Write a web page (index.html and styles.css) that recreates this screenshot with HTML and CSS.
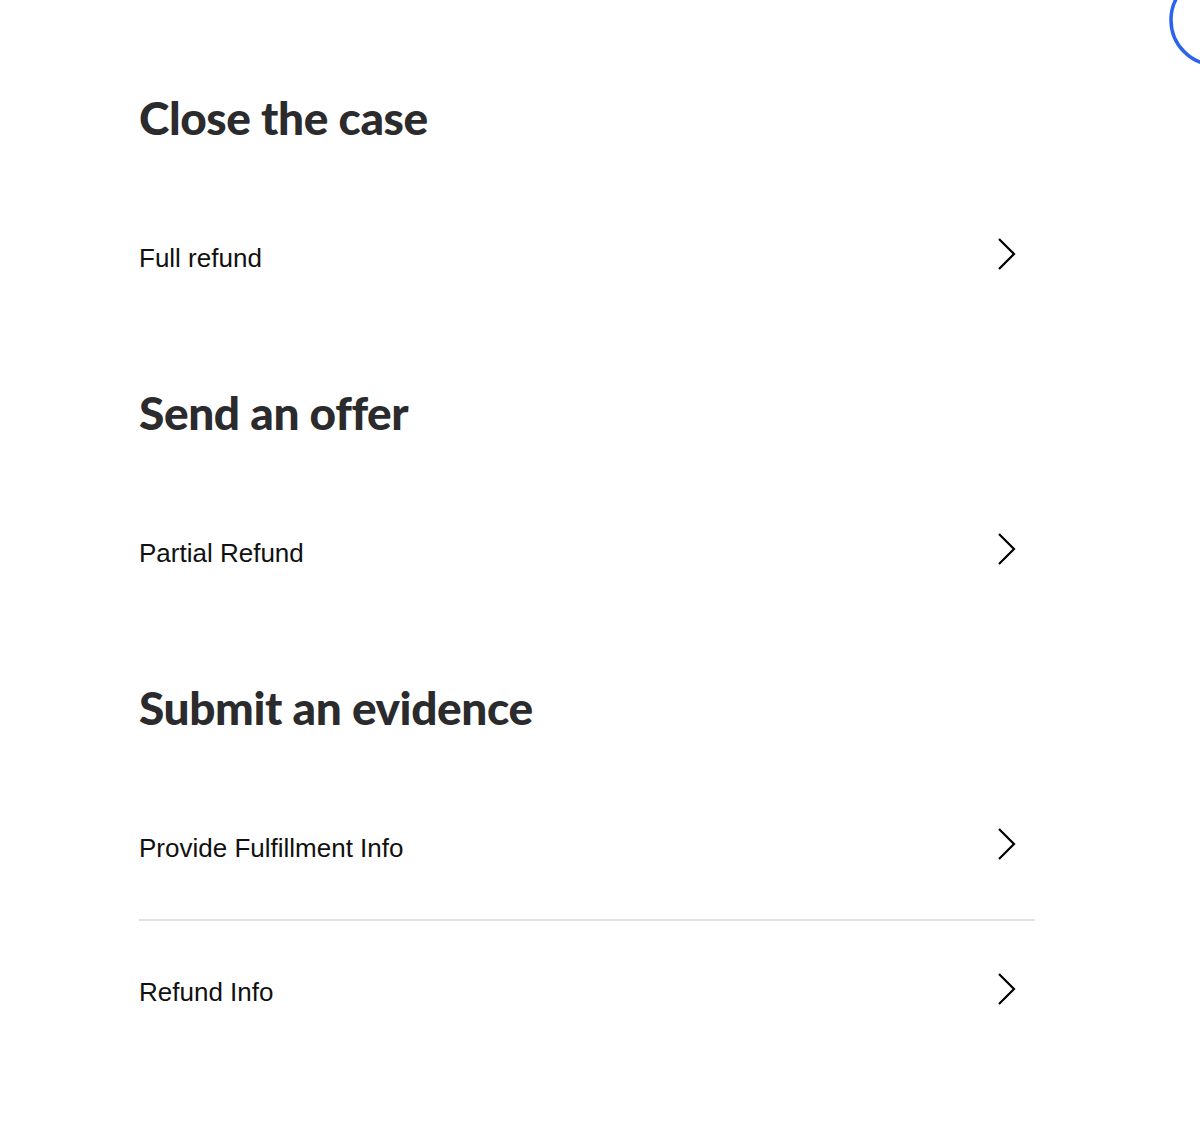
FILE: index.html
```html
<!DOCTYPE html>
<html>
<head>
<meta charset="utf-8">
<link rel="stylesheet" href="styles.css">
</head>
<body>
<svg class="ring" viewBox="0 0 40 80"><circle cx="56" cy="20" r="45"/></svg>
<main class="panel">
  <section class="group">
    <h2 class="title">Close the case</h2>
    <div class="row"><span>Full refund</span><svg class="chev" viewBox="0 0 20 34"><path d="M2 2 L17 17 L2 32"/></svg></div>
  </section>
  <section class="group">
    <h2 class="title">Send an offer</h2>
    <div class="row"><span>Partial Refund</span><svg class="chev" viewBox="0 0 20 34"><path d="M2 2 L17 17 L2 32"/></svg></div>
  </section>
  <section class="group">
    <h2 class="title">Submit an evidence</h2>
    <div class="row"><span>Provide Fulfillment Info</span><svg class="chev" viewBox="0 0 20 34"><path d="M2 2 L17 17 L2 32"/></svg></div>
    <div class="row divided"><span>Refund Info</span><svg class="chev" viewBox="0 0 20 34"><path d="M2 2 L17 17 L2 32"/></svg></div>
  </section>
</main>
</body>
</html>
```
FILE: styles.css
```css
html, body { margin: 0; padding: 0; background: #fff; }
body { position: relative; width: 1200px; height: 1144px; overflow: hidden; }
.ring {
  position: absolute; left: 1160px; top: 0;
  width: 40px; height: 80px;
  fill: none; stroke: #2a63ec; stroke-width: 3.5;
}
.panel { padding: 35px 165px 0 139px; }
.group { display: flex; flex-direction: column; }
.title {
  margin: 0; height: 151px; box-sizing: border-box;
  padding-top: 59px;
  font-family: "Lato", sans-serif; font-weight: 900;
  font-size: 46px; line-height: 48px; letter-spacing: -0.4px;
  color: #2b2b2d;
}
.row {
  height: 144px; display: flex; align-items: center; justify-content: space-between;
  font-family: "Liberation Sans", Arial, sans-serif; font-size: 26px; color: #111;
  padding-right: 18px;
}
.row.divided { border-top: 2px solid #e2e2e2; height: 143px; margin-top: -1px; }
.chev {
  width: 20px; height: 34px; fill: none; stroke: #000; stroke-width: 2.2;
  position: relative; top: -4px;
}
```
